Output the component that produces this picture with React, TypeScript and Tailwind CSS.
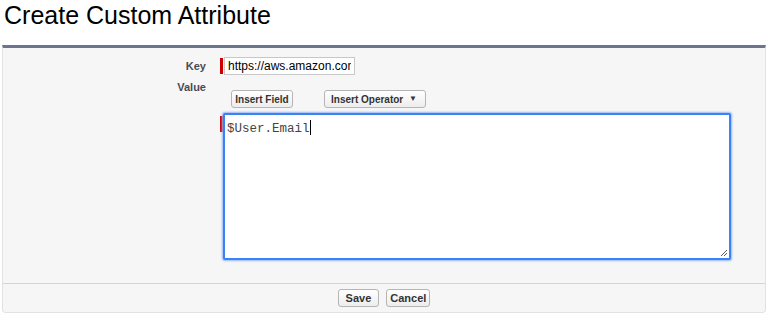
import React from "react";

const App: React.FC = () => {
  return (
    <div className="w-[768px] h-[321px] bg-white font-['Liberation_Sans',Arial,sans-serif] text-black">
      {/* Title */}
      <h1 className="pl-[4px] pt-[1px] text-[25px] leading-[29px]">
        Create Custom Attribute
      </h1>

      {/* Panel */}
      <div className="mt-[15px] mx-[2px] bg-[#f6f6f6] border-t-[3px] border-t-[#6b7590] border-x border-b border-x-[#e2e2e2] border-b-[#e2e2e2] rounded-b-[4px]">
        <div className="h-[235px] pt-[9px]">
          {/* Key row */}
          <div className="flex items-center h-[18px]">
            <div className="w-[203px] text-right text-[11px] font-bold text-[#4a4a56]">
              Key
            </div>
            <div className="ml-[14px] w-[3px] h-[16px] bg-[#c00]" />
            <input
              readOnly
              value="https://aws.amazon.com"
              className="ml-[1px] w-[131px] h-[18px] border border-[#c7c7c7] bg-white px-[3px] text-[12px] text-black outline-none"
            />
          </div>

          {/* Value row */}
          <div className="flex mt-[5px]">
            <div className="w-[203px] text-right text-[11px] font-bold text-[#4a4a56] leading-[14px]">
              Value
            </div>
            <div className="ml-[14px] flex flex-col">
              <div className="flex gap-[31px] ml-[11px] mt-[10px]">
                <button className="w-[62px] h-[18px] rounded-[3px] border border-[#b5b5b5] bg-gradient-to-b from-white to-[#ededed] text-[10px] font-bold text-[#333]">
                  Insert Field
                </button>
                <button className="w-[102px] h-[18px] pl-[6px] pr-[8px] rounded-[3px] border border-[#b5b5b5] bg-gradient-to-b from-white to-[#ededed] text-[10px] font-bold text-[#333] flex items-center justify-between">
                  Insert Operator
                  <span className="text-[8px]">▼</span>
                </button>
              </div>
              <div className="flex mt-[5px]">
                <div className="w-[3px] h-[16px] mt-[3px] bg-[#c00]" />
                <div className="w-[508px] h-[147px] rounded-[2px] border-2 border-[#3b82f6] shadow-[0_0_2px_1px_#93b8f5] bg-white px-[2px] py-0 relative">
                  <span className="font-['Liberation_Mono',monospace] text-[12.5px] text-[#444] leading-[16px]">
                    $User.Email
                  </span>
                  <span className="inline-block w-px h-[15px] bg-black align-[-3px]" />
                  <svg
                    className="absolute right-[1px] bottom-[1px]"
                    width="8"
                    height="8"
                    viewBox="0 0 8 8"
                  >
                    <path d="M7 1 L1 7 M7 4 L4 7" stroke="#555" strokeWidth="1" />
                  </svg>
                </div>
              </div>
            </div>
          </div>
        </div>

        {/* Footer */}
        <div className="border-t border-[#d4d4d4] h-[29px] flex items-center justify-center gap-[7px]">
          <button className="h-[18px] px-[7px] rounded-[3px] border border-[#b5b5b5] bg-gradient-to-b from-white to-[#ededed] text-[11px] font-bold text-[#333]">
            Save
          </button>
          <button className="h-[18px] px-[3px] rounded-[3px] border border-[#b5b5b5] bg-gradient-to-b from-white to-[#ededed] text-[11px] font-bold text-[#333]">
            Cancel
          </button>
        </div>
      </div>
    </div>
  );
};

export default App;
